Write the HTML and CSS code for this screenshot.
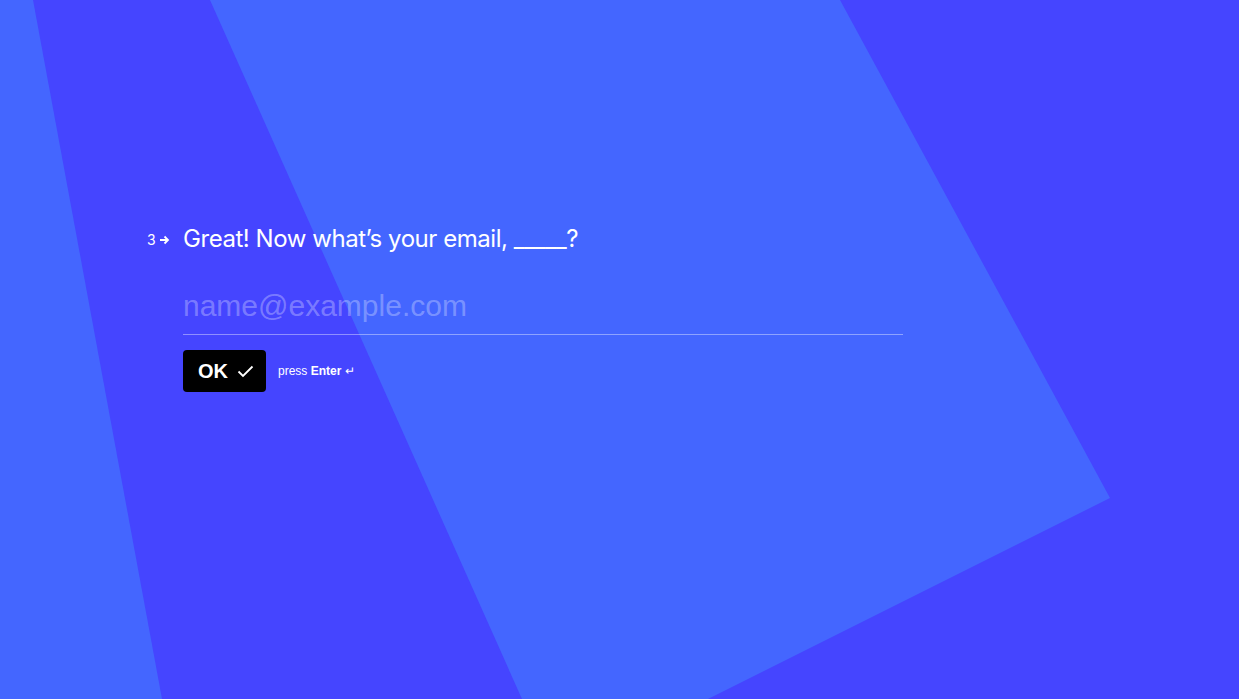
FILE: index.html
```
<!DOCTYPE html>
<html>
<head>
<meta charset="utf-8">
<link rel="stylesheet" href="styles.css">
</head>
<body>
<div class="stage">
  <svg class="backdrop" width="1239" height="699" viewBox="0 0 1239 699" aria-hidden="true">
    <rect width="1239" height="699" fill="#4545FF"/>
    <polygon points="0,0 33,0 162,699 0,699" fill="#4466FF"/>
    <polygon points="210,0 840,0 1110,498 708,699 522,699" fill="#4466FF"/>
  </svg>
  <main class="form">
    <div class="question">
      <div class="num">3<svg class="arrow" width="11" height="10" viewBox="0 0 11 10"><path d="M1 5h8M5.5 1.5L9 5l-3.5 3.5" fill="none" stroke="#fff" stroke-width="1.8"/></svg></div>
      <h1 class="title">Great! Now what’s your email, _____?</h1>
    </div>
    <div class="answer">
      <div class="input">name@example.com</div>
      <div class="actions">
        <button class="ok">OK <svg width="17" height="13" viewBox="0 0 17 13"><path d="M1.5 6.5l4.5 4.5L15.5 1.5" fill="none" stroke="#fff" stroke-width="1.8"/></svg></button>
        <span class="hint">press <b>Enter</b> ↵</span>
      </div>
    </div>
  </main>
</div>
</body>
</html>
```
FILE: styles.css
```
html, body {
  margin: 0;
  padding: 0;
}
body {
  width: 1239px;
  height: 699px;
  overflow: hidden;
  background: #4545FF;
  font-family: "Inter", "Liberation Sans", sans-serif;
  color: #fff;
}
.stage {
  position: relative;
  width: 1239px;
  height: 699px;
}
.backdrop {
  position: absolute;
  left: 0;
  top: 0;
}
.form {
  position: relative;
  padding: 223px 0 0 147px;
}
.question {
  display: flex;
  align-items: flex-start;
}
.num {
  width: 36px;
  display: flex;
  align-items: center;
  gap: 3px;
  font-size: 14px;
  line-height: 32px;
  height: 32px;
  padding-top: 1px;
  box-sizing: border-box;
}
.title {
  margin: 0;
  font-weight: 400;
  font-size: 24px;
  line-height: 32px;
  letter-spacing: -0.45px;
}
.answer {
  padding-left: 36px;
  padding-top: 31px;
}
.input {
  width: 720px;
  font-family: "Liberation Sans", Arial, sans-serif;
  font-size: 30px;
  line-height: 40px;
  color: rgba(255, 255, 255, 0.3);
  padding-bottom: 8px;
  border-bottom: 1px solid rgba(255, 255, 255, 0.4);
}
.actions {
  display: flex;
  align-items: center;
  gap: 12px;
  margin-top: 15px;
}
.ok {
  display: flex;
  align-items: center;
  gap: 9px;
  width: 83px;
  height: 42px;
  padding: 0 0 0 15px;
  border: 0;
  border-radius: 4px;
  background: #000;
  color: #fff;
  font-family: "Liberation Sans", Arial, sans-serif;
  font-weight: 700;
  font-size: 20px;
}
.hint {
  font-family: "Liberation Sans", Arial, sans-serif;
  font-size: 12px;
  color: #fff;
}
.hint b {
  font-weight: 700;
}
```
